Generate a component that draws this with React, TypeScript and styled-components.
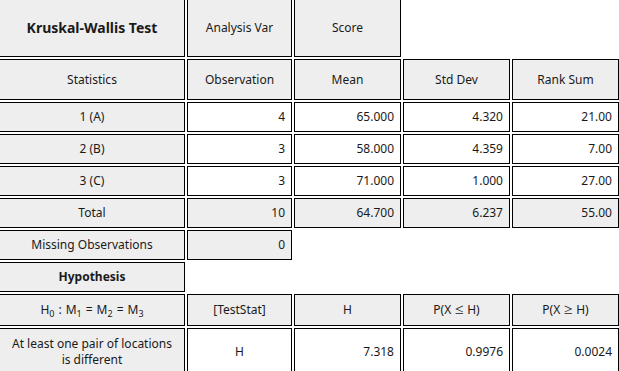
import React from "react";
import styled, { createGlobalStyle } from "styled-components";

const GlobalStyle = createGlobalStyle`
  html, body {
    margin: 0;
    padding: 0;
    background: #ffffff;
    overflow: hidden;
  }
  body {
    font-family: "Noto Sans", "Noto Sans CJK KR", sans-serif;
    font-size: 12px;
    color: #1a1a1a;
  }
`;

const Sheet = styled.div`
  display: grid;
  grid-template-columns: 186px 105px 107px 107px 107px;
  grid-template-rows: 59px 41px repeat(6, 30px) 32px 48px;
  gap: 2px;
  margin: -2px 0 0 -1px;
  width: max-content;
`;

type Tone = "head" | "data";
type Align = "center" | "right";

const Cell = styled.div<{ $tone?: Tone; $align?: Align; $bold?: boolean; $size?: number }>`
  box-sizing: border-box;
  display: flex;
  align-items: center;
  justify-content: ${(p) => (p.$align === "right" ? "flex-end" : "center")};
  text-align: center;
  padding: 0 6px;
  border: 1px solid #000000;
  background: ${(p) => (p.$tone === "data" ? "#ffffff" : "#eeeeee")};
  font-weight: ${(p) => (p.$bold ? 700 : 400)};
  font-size: ${(p) => p.$size ?? 12}px;
  line-height: 16px;
  white-space: pre-line;
`;

const Blank = styled.div<{ $span?: number }>`
  grid-column: span ${(p) => p.$span ?? 1};
`;

const Sub = styled.sub`
  font-size: 9px;
  vertical-align: -3px;
  line-height: 0;
`;

const Op = styled.span`
  margin: 0 4px;
`;

const Rel = styled.span`
  font-size: 10px;
  margin: 0 3px;
`;

const groups = [
  { label: "1 (A)", n: "4", mean: "65.000", sd: "4.320", rank: "21.00" },
  { label: "2 (B)", n: "3", mean: "58.000", sd: "4.359", rank: "7.00" },
  { label: "3 (C)", n: "3", mean: "71.000", sd: "1.000", rank: "27.00" },
];

export default function App() {
  return (
    <>
      <GlobalStyle />
      <Sheet>
        <Cell $bold $size={14}>Kruskal-Wallis Test</Cell>
        <Cell>Analysis Var</Cell>
        <Cell>Score</Cell>
        <Blank $span={2} />

        <Cell>Statistics</Cell>
        <Cell>Observation</Cell>
        <Cell>Mean</Cell>
        <Cell>Std Dev</Cell>
        <Cell>Rank Sum</Cell>

        {groups.map((g) => (
          <React.Fragment key={g.label}>
            <Cell>{g.label}</Cell>
            <Cell $tone="data" $align="right">{g.n}</Cell>
            <Cell $tone="data" $align="right">{g.mean}</Cell>
            <Cell $tone="data" $align="right">{g.sd}</Cell>
            <Cell $tone="data" $align="right">{g.rank}</Cell>
          </React.Fragment>
        ))}

        <Cell>Total</Cell>
        <Cell $align="right">10</Cell>
        <Cell $align="right">64.700</Cell>
        <Cell $align="right">6.237</Cell>
        <Cell $align="right">55.00</Cell>

        <Cell>Missing Observations</Cell>
        <Cell $align="right">0</Cell>
        <Blank $span={3} />

        <Cell $bold>Hypothesis</Cell>
        <Blank $span={4} />

        <Cell>
          <span>
            H<Sub>0</Sub>
            <Op>:</Op>M<Sub>1</Sub>
            <Op>=</Op>M<Sub>2</Sub>
            <Op>=</Op>M<Sub>3</Sub>
          </span>
        </Cell>
        <Cell>[TestStat]</Cell>
        <Cell>H</Cell>
        <Cell>
          <span>
            P(X<Rel>≤</Rel>H)
          </span>
        </Cell>
        <Cell>
          <span>
            P(X<Rel>≥</Rel>H)
          </span>
        </Cell>

        <Cell>{"At least one pair of locations\nis different"}</Cell>
        <Cell $tone="data">H</Cell>
        <Cell $tone="data" $align="right">7.318</Cell>
        <Cell $tone="data" $align="right">0.9976</Cell>
        <Cell $tone="data" $align="right">0.0024</Cell>
      </Sheet>
    </>
  );
}
